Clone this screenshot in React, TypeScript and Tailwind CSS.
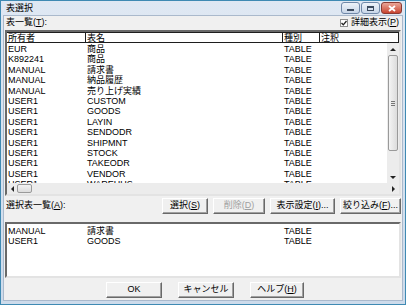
import { ReactNode } from 'react'

const font = { fontFamily: '"Liberation Sans", "Noto Sans CJK JP", sans-serif' }

const rows: [string, string][] = [
  ['EUR', '商品'],
  ['K892241', '商品'],
  ['MANUAL', '請求書'],
  ['MANUAL', '納品履歴'],
  ['MANUAL', '売り上げ実績'],
  ['USER1', 'CUSTOM'],
  ['USER1', 'GOODS'],
  ['USER1', 'LAYIN'],
  ['USER1', 'SENDODR'],
  ['USER1', 'SHIPMNT'],
  ['USER1', 'STOCK'],
  ['USER1', 'TAKEODR'],
  ['USER1', 'VENDOR'],
  ['USER1', 'WAREHUS'],
]

const picked: [string, string][] = [
  ['MANUAL', '請求書'],
  ['USER1', 'GOODS'],
]

function Key({ k }: { k: string }) {
  return (
    <>
      (<span className="underline underline-offset-1">{k}</span>)
    </>
  )
}

function Btn({ children, w, off }: { children: ReactNode; w: string; off?: boolean }) {
  return (
    <div
      className={`${w} h-[16px] flex items-center justify-center border border-t-white border-l-white border-r-[#696969] border-b-[#696969] shadow-[inset_-1px_-1px_0_#a0a0a0] bg-[#f0f0f0] whitespace-nowrap overflow-hidden ${
        off ? 'text-[#a0a0a0]' : 'text-black'
      }`}
    >
      {children}
    </div>
  )
}

function Row({ a, b }: { a: string; b: string }) {
  return (
    <div className="flex h-[10.4px] leading-[10.4px] whitespace-nowrap">
      <div className="w-[79px] pl-[1px]">{a}</div>
      <div className="w-[197px] pl-[1px]">{b}</div>
      <div className="w-[37px] pl-[1px]">TABLE</div>
    </div>
  )
}

function Arrow({ dir }: { dir: 'up' | 'down' | 'left' | 'right' }) {
  const pts = {
    up: '1,4 4,1 7,4',
    down: '1,1 4,4 7,1',
    left: '4,1 1,4 4,7',
    right: '1,1 4,4 1,7',
  }[dir]
  const vert = dir === 'up' || dir === 'down'
  return (
    <svg width={vert ? 8 : 5} height={vert ? 5 : 8} viewBox={vert ? '0 0 8 5' : '0 0 5 8'}>
      <polygon points={pts} fill="#222" />
    </svg>
  )
}

function Caption() {
  return (
    <div className="h-[14px] flex items-start justify-between">
      <div className="pl-[5px] pt-[2px] text-[9px] leading-[11px] text-black">表選択</div>
      <div className="flex gap-[1px] pt-[1px] pr-[3px]">
        <div className="w-[19px] h-[12px] rounded-[3px] border border-[#7088a8] bg-gradient-to-b from-[#eef3f9] to-[#c8d6e8] flex items-end justify-center pb-[2px]">
          <div className="w-[7px] h-[2px] bg-[#3b4a5e]" />
        </div>
        <div className="w-[19px] h-[12px] rounded-[3px] border border-[#7088a8] bg-gradient-to-b from-[#eef3f9] to-[#c8d6e8] flex items-center justify-center">
          <div className="w-[7px] h-[5px] border border-t-2 border-[#3b4a5e]" />
        </div>
        <div className="w-[21px] h-[12px] rounded-[3px] border border-[#8a3a32] bg-gradient-to-b from-[#e9a597] to-[#c7432f] flex items-center justify-center">
          <svg width="8" height="7" viewBox="0 0 8 7">
            <path d="M1 1 L7 6 M7 1 L1 6" stroke="white" strokeWidth="1.8" />
          </svg>
        </div>
      </div>
    </div>
  )
}

export default function App() {
  return (
    <div className="w-[409px] h-[308px] bg-white text-[9px] text-black" style={font}>
      <div className="w-[406px] h-[305px] border border-[#3f8ab3] bg-gradient-to-b from-[#dfe8f3] to-[#cddbeb] flex flex-col">
        <Caption />
        <div className="flex-1 mx-[2px] mb-[3px] bg-[#f0f0f0] border border-[#aab9cc] flex flex-col pl-[1px] pr-[1px]">
          <div className="h-[14px] flex items-center justify-between pl-[1px] pr-[2px]">
            <div>
              表一覧<Key k="T" />:
            </div>
            <div className="flex items-center gap-[3px]">
              <div className="w-[8px] h-[8px] border border-[#8f8f8f] bg-white flex items-center justify-center">
                <svg width="6" height="6" viewBox="0 0 6 6">
                  <path d="M0.5 3 L2.3 4.8 L5.5 1" stroke="#222" strokeWidth="1.3" fill="none" />
                </svg>
              </div>
              <div>
                詳細表示<Key k="P" />
              </div>
            </div>
          </div>

          <div className="h-[166px] border-2 border-t-[#696969] border-l-[#696969] border-r-[#e3e3e3] border-b-[#e3e3e3] bg-white flex flex-col">
            <div className="flex h-[11px] leading-[10px] border-t border-b border-[#1e1e1e] whitespace-nowrap">
              <div className="w-[79px] border-r border-[#1e1e1e] pl-[1px]">所有者</div>
              <div className="w-[197px] border-r border-[#1e1e1e] pl-[1px]">表名</div>
              <div className="w-[37px] border-r border-[#1e1e1e] pl-[1px]">種別</div>
              <div className="flex-1 border-r border-[#1e1e1e] pl-[1px]">注釈</div>
            </div>
            <div className="flex flex-1 min-h-0">
              <div className="flex-1 overflow-hidden pt-[1px]">
                {rows.map((r, i) => (
                  <Row key={i} a={r[0]} b={r[1]} />
                ))}
              </div>
              <div className="w-[12px] bg-[#ececec] flex flex-col items-center">
                <div className="h-[12px] flex items-center justify-center">
                  <Arrow dir="up" />
                </div>
                <div className="w-[10px] h-[96px] rounded-[2px] border border-[#9a9a9a] bg-gradient-to-r from-[#f4f4f4] to-[#dcdcdc] flex flex-col items-center justify-center gap-[1px]">
                  <div className="w-[4px] h-[1px] bg-[#777]" />
                  <div className="w-[4px] h-[1px] bg-[#777]" />
                  <div className="w-[4px] h-[1px] bg-[#777]" />
                </div>
                <div className="flex-1" />
                <div className="h-[12px] flex items-center justify-center">
                  <Arrow dir="down" />
                </div>
              </div>
            </div>
            <div className="h-[11px] bg-[#ececec] flex items-center">
              <div className="w-[10px] flex justify-center">
                <Arrow dir="left" />
              </div>
              <div className="w-[15px] h-[9px] rounded-[2px] border border-[#9a9a9a] bg-gradient-to-b from-[#f4f4f4] to-[#dcdcdc]" />
              <div className="flex-1" />
              <div className="w-[12px] flex justify-center">
                <Arrow dir="right" />
              </div>
            </div>
          </div>

          <div className="h-[18px] mt-[1px] flex items-center justify-between pl-[1px]">
            <div>
              選択表一覧<Key k="A" />:
            </div>
            <div className="flex gap-[5px]">
              <Btn w="w-[46px]">
                選択<Key k="S" />
              </Btn>
              <Btn w="w-[52px]" off>
                削除<Key k="D" />
              </Btn>
              <Btn w="w-[65px]">
                表示設定<Key k="I" />...
              </Btn>
              <Btn w="w-[61px]">
                絞り込み<Key k="F" />...
              </Btn>
            </div>
          </div>

          <div className="h-[56px] mt-[7px] border-2 border-t-[#696969] border-l-[#696969] border-r-[#e3e3e3] border-b-[#e3e3e3] bg-white pt-[2px]">
            {picked.map((r, i) => (
              <Row key={i} a={r[0]} b={r[1]} />
            ))}
          </div>

          <div className="flex mt-[4px] pl-[101px] gap-[16px]">
            <Btn w="w-[56px]">OK</Btn>
            <Btn w="w-[56px]">キャンセル</Btn>
            <Btn w="w-[54px]">
              ヘルプ<Key k="H" />
            </Btn>
          </div>
        </div>
      </div>
    </div>
  )
}
